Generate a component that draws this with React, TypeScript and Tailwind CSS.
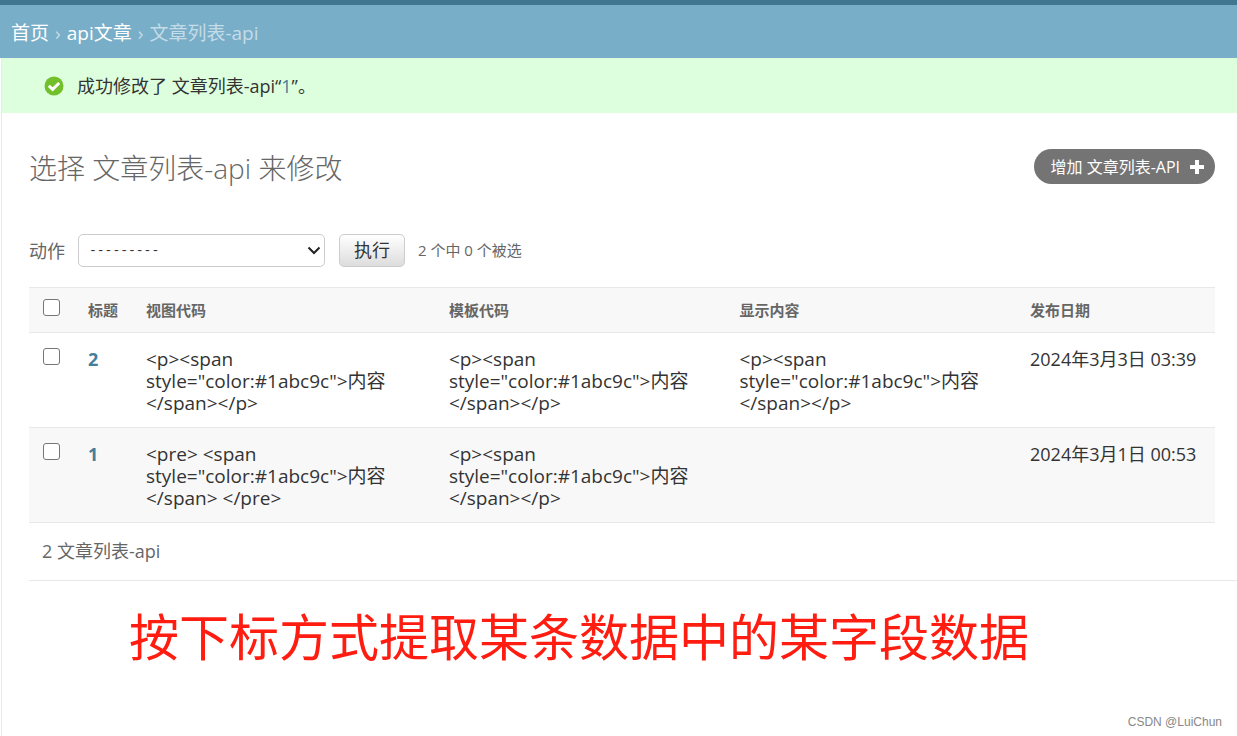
import { ReactNode } from "react";

type Article = {
  id: number;
  view: string;
  template: string;
  display: string;
  published: string;
};

const articles: Article[] = [
  {
    id: 2,
    view: '<p><span\nstyle="color:#1abc9c">内容\n</span></p>',
    template: '<p><span\nstyle="color:#1abc9c">内容\n</span></p>',
    display: '<p><span\nstyle="color:#1abc9c">内容\n</span></p>',
    published: "2024年3月3日 03:39",
  },
  {
    id: 1,
    view: '<pre> <span\nstyle="color:#1abc9c">内容\n</span> </pre>',
    template: '<p><span\nstyle="color:#1abc9c">内容\n</span></p>',
    display: "",
    published: "2024年3月1日 00:53",
  },
];

function Checkbox({ label }: { label: string }) {
  return (
    <input
      type="checkbox"
      aria-label={label}
      className="block size-[17px] appearance-none rounded-[3px] border border-[#767676] bg-white checked:bg-[#417690]"
    />
  );
}

function HeadCell({ className = "", children }: { className?: string; children: ReactNode }) {
  return (
    <th scope="col" className={`px-3.5 text-left align-middle text-[15px] font-bold text-[#666] ${className}`}>
      {children}
    </th>
  );
}

function CodeCell({ code }: { code: string }) {
  return (
    <td className="px-3.5 pt-[15px] pb-[13px] text-[19px] leading-[22px] whitespace-pre-line">{code}</td>
  );
}

function Breadcrumbs() {
  return (
    <nav className="flex h-[58px] items-center gap-1.5 border-t-5 border-[#417690] bg-[#79aec8] px-[11px] pt-1 text-[19px] text-[#c4dce8]">
      <a href="#home" className="text-white">首页</a>
      <span>›</span>
      <a href="#api" className="text-white">api文章</a>
      <span>›</span>
      <span>文章列表-api</span>
    </nav>
  );
}

function SuccessMessage() {
  return (
    <div className="flex h-[55px] items-center gap-[13px] bg-[#ddffdd] pl-[42px] text-[18px] text-[#333]">
      <svg viewBox="0 0 20 20" className="size-5">
        <circle cx="10" cy="10" r="9.5" fill="#70bf2b" />
        <path d="M4.8 9.7 8.6 13.4l6.6-6.4" fill="none" stroke="#fff" strokeWidth="3" />
      </svg>
      <p className="pt-0.5">
        成功修改了 文章列表-api“<a href="#1" className="text-[#447e9b]">1</a>”。
      </p>
    </div>
  );
}

function ActionBar() {
  return (
    <div className="mt-[47px] flex items-center text-[18px] text-[#666]">
      <label htmlFor="action" className="pt-0.5">动作</label>
      <div className="relative ml-[13px]">
        <select
          id="action"
          className="block h-[33px] w-[247px] appearance-none rounded-[5px] border border-[#ccc] bg-white px-2.5 font-['Liberation_Mono',monospace] text-[13px] text-[#333]"
        >
          <option>---------</option>
        </select>
        <svg viewBox="0 0 14 9" className="pointer-events-none absolute top-3 right-1 h-[9px] w-3.5">
          <path d="M1.5 1.5 7 7l5.5-5.5" fill="none" stroke="#222" strokeWidth="2" />
        </svg>
      </div>
      <button
        type="button"
        className="ml-3.5 h-[33px] w-[66px] rounded-[5px] border border-[#ccc] bg-linear-to-b from-white to-[#dddddd] text-[18px] text-[#333]"
      >
        执行
      </button>
      <span className="ml-[13px] text-[15px]">2 个中 0 个被选</span>
    </div>
  );
}

function ArticleTable() {
  return (
    <table className="mt-5 w-full table-fixed border-collapse text-[18px] leading-[22px] text-[#333]">
      <thead>
        <tr className="h-[45px] border-y border-[#e8e8e8] bg-[#f8f8f8]">
          <th className="w-[45px] pt-[11px] pl-3.5 align-top">
            <Checkbox label="全选" />
          </th>
          <HeadCell className="w-[58px] whitespace-nowrap">标题</HeadCell>
          <HeadCell>视图代码</HeadCell>
          <HeadCell className="w-[24.5%]">模板代码</HeadCell>
          <HeadCell className="w-[24.5%]">显示内容</HeadCell>
          <HeadCell className="w-[199px]">发布日期</HeadCell>
        </tr>
      </thead>
      <tbody>
        {articles.map((article) => (
          <tr key={article.id} className="border-b border-[#e8e8e8] align-top even:bg-[#f8f8f8]">
            <td className="pt-[15px] pl-3.5">
              <Checkbox label={`选择 ${article.id}`} />
            </td>
            <th scope="row" className="px-3.5 pt-[15px] text-left font-bold">
              <a href={`#${article.id}`} className="text-[#447e9b]">{article.id}</a>
            </th>
            <CodeCell code={article.view} />
            <CodeCell code={article.template} />
            <CodeCell code={article.display} />
            <td className="pt-[15px] pl-3.5 whitespace-nowrap">{article.published}</td>
          </tr>
        ))}
      </tbody>
    </table>
  );
}

export default function App() {
  return (
    <div className="flex min-h-screen flex-col bg-white font-['Open_Sans','Noto_Sans_CJK_SC',sans-serif]">
      <Breadcrumbs />
      <div className="ml-px flex grow flex-col border-l border-[#eaeaea]">
        <SuccessMessage />
        <main className="pt-9 pl-[27px]">
          <div className="pr-[22px]">
            <div className="flex items-start justify-between">
              <h1 className="text-[28px] leading-[38px] font-light text-[#666]">选择 文章列表-api 来修改</h1>
              <a
                href="#add"
                className="flex h-[35px] items-center gap-2.5 rounded-full bg-[#747474] pr-[11px] pl-4 text-base text-white uppercase"
              >
                增加 文章列表-api
                <svg viewBox="0 0 14 14" className="size-3.5">
                  <path d="M7 0v14M0 7h14" stroke="#fff" strokeWidth="4" />
                </svg>
              </a>
            </div>
            <ActionBar />
            <ArticleTable />
          </div>
          <p className="border-b border-[#e8e8e8] pt-[15px] pb-4 pl-[13px] text-[18px] leading-[26px] text-[#666]">
            2 文章列表-api
          </p>
          <p className="mt-5 pl-[100px] text-[50px] leading-[72px] text-[#ff1c10]">
            按下标方式提取某条数据中的某字段数据
          </p>
        </main>
        <footer className="mt-auto pr-[15px] pb-1.5 text-right font-['Liberation_Sans',sans-serif] text-[12px] leading-4 text-[#888]">
          CSDN @LuiChun
        </footer>
      </div>
    </div>
  );
}
